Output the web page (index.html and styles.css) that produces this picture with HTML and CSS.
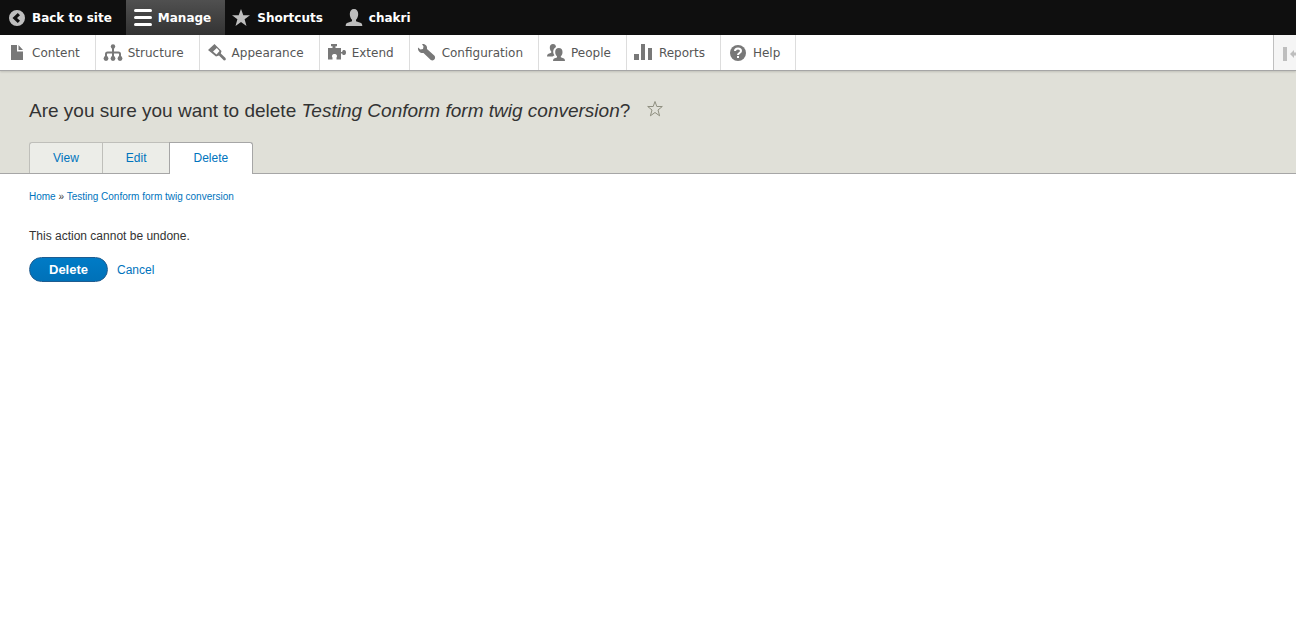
FILE: index.html
```html
<!DOCTYPE html>
<html lang="en">
<head>
    <meta charset="utf-8">
    <title>Are you sure you want to delete Testing Conform form twig conversion?</title>
    <link rel="stylesheet" href="styles.css">
</head>
<body>
    <nav class="toolbar-bar" aria-label="Toolbar">
        <a class="bar-item" href="#">
            <svg class="icon" viewBox="0 0 20 20"><path fill-rule="evenodd" d="M10 2a8 8 0 1 0 0 16a8 8 0 0 0 0-16zM10.800 5L13 7.200L10 10L13 12.800L10.800 15L5.500 10z"/></svg>
            Back to site
        </a>
        <a class="bar-item active" href="#">
            <svg class="icon" viewBox="0 0 20 20"><rect x="1" y="1" width="18" height="3" rx="1.500"/><rect x="1" y="8" width="18" height="3" rx="1.500"/><rect x="1" y="15" width="18" height="3" rx="1.500"/></svg>
            Manage
        </a>
        <a class="bar-item" href="#">
            <svg class="icon" viewBox="0 0 20 20"><path d="M9 1L11.300 7.200H18L12.600 11.300L14.500 18L9 14L3.500 18L5.400 11.300L0 7.200H6.700z"/></svg>
            Shortcuts
        </a>
        <a class="bar-item" href="#">
            <svg class="icon" viewBox="0 0 20 20"><path d="M10 1C7.300 1 5.800 3 5.800 6C5.800 8.500 6.700 10.500 8 11.700V13.200L3 15C2 15.500 1.700 16.500 1.700 18H18.300C18.300 16.500 18 15.500 17 15L12 13.200V11.700C13.300 10.500 14.200 8.500 14.200 6C14.200 3 12.700 1 10 1z"/></svg>
            chakri
        </a>
    </nav>

    <nav class="toolbar-tray" aria-label="Administration menu">
        <a class="tray-item" href="#">
            <svg class="icon" viewBox="0 0 20 20"><path d="M4 2H10V8.500H16V17H4zM11.500 2L16 7H11.500z"/></svg>
            Content
        </a>
        <a class="tray-item" href="#">
            <svg class="icon" viewBox="0 0 20 20"><circle cx="10" cy="3.500" r="2.200"/><circle cx="3" cy="15.500" r="2.400"/><circle cx="10" cy="15.500" r="2.400"/><circle cx="17" cy="15.500" r="2.400"/><path class="line" d="M10 4V15M3 15V11Q3 9.500 4.500 9.500H15.500Q17 9.500 17 11V15"/></svg>
            Structure
        </a>
        <a class="tray-item" href="#">
            <svg class="icon" viewBox="0 0 20 20"><path fill-rule="evenodd" d="M7.500 1L14.500 8L13.800 10.500L18.500 15Q19.500 17.500 17 17.500L12 12.500L9 13.500L1 7zM9.800 5L6 8.500L9.500 11.500L12.500 8z"/></svg>
            Appearance
        </a>
        <a class="tray-item" href="#">
            <svg class="icon" viewBox="0 0 20 20"><path d="M1 5H5.500V3.200H4V1H10V3.200H8.500V5H14V9H15.200C15.200 7.500 16 7 17.200 7C18.500 7 19 8.200 19 9.500S18.500 12 17.200 12C16 12 15.200 11.500 15.200 10.500H14V16.500H9.500V14.500C10.500 13.500 10.200 11 7.500 11S4.500 13.500 5.500 14.500V16.500H1z"/></svg>
            Extend
        </a>
        <a class="tray-item" href="#">
            <svg class="icon" viewBox="0 0 20 20"><path d="M5 1C8.500 .500 10.500 3 10 6L17.500 12.800C19.300 15.500 16.500 18.700 13.800 17L6.500 10C3.500 10.500 .500 8 1 4.500L3.500 6.500L6 6L6.500 3.500z"/></svg>
            Configuration
        </a>
        <a class="tray-item" href="#">
            <svg class="icon" viewBox="0 0 20 20"><path d="M7 1C5 1 3.800 2.300 3.800 4.500C3.800 6.500 4.400 7.500 5.200 8.300V9.700L2 11Q1 11.500 1 13.500H6.500L8.500 12.300C7 10.500 6.500 7 8.800 5L10 4C9.800 2 9 1 7 1z"/><path d="M12.800 5C10.500 5 9.200 6.500 9.200 9C9.200 11 9.900 12.500 11 13.300V14.500L8 15.500Q7 16 7 18H19Q19 16 18 15.500L14.800 14.300V13.300C15.900 12.500 16.500 11 16.500 9C16.500 6.500 15.200 5 12.800 5z"/></svg>
            People
        </a>
        <a class="tray-item" href="#">
            <svg class="icon" viewBox="0 0 20 20"><path d="M0 11H5V17H0zM7 1H11V17H7zM14 5H18V17H14z"/></svg>
            Reports
        </a>
        <a class="tray-item" href="#">
            <svg class="icon" viewBox="0 0 20 20"><circle cx="10" cy="10" r="8"/><path class="mark" d="M7 8C7 4.500 13 4.500 13 8C13 10 10 10 10 12"/><rect class="dot" x="9" y="13" width="2" height="2"/></svg>
            Help
        </a>
        <button class="toggle" type="button" aria-label="Vertical orientation">
            <svg class="toggle-icon" viewBox="0 0 14 14"><path d="M0 0H4V14H0zM7 7L11 3V5.500H14V8.500H11V11z"/></svg>
        </button>
    </nav>

    <header class="content-header">
        <h1 class="page-title">
            <span>Are you sure you want to delete <em>Testing Conform form twig conversion</em>?</span>
            <button class="shortcut" type="button" aria-label="Add to shortcuts">
                <svg class="star" viewBox="0 0 18 18"><path d="M9 1.500L10.800 6.500H16.300L12 10L13.600 15.800L9 12.500L4.400 15.800L6 10L1.700 6.500H7.200z"/></svg>
            </button>
        </h1>
        <nav class="tabs" aria-label="Tabs">
            <a class="tab" href="#">View</a>
            <a class="tab" href="#">Edit</a>
            <a class="tab current" href="#">Delete</a>
        </nav>
    </header>

    <main class="content">
        <nav class="breadcrumb" aria-label="Breadcrumb">
            <a href="#">Home</a> » <a href="#">Testing Conform form twig conversion</a>
        </nav>
        <form class="confirm-form">
            <p class="message">This action cannot be undone.</p>
            <div class="actions">
                <button class="button-primary" type="submit">Delete</button>
                <a href="#">Cancel</a>
            </div>
        </form>
    </main>
</body>
</html>
```
FILE: styles.css
```css
* {
    box-sizing: border-box;
}
body {
    margin: 0;
    background-color: #fff;
    color: #333;
    font-family: "Liberation Sans", Arial, sans-serif;
    font-size: 12px;
    line-height: 18px;
}
a {
    color: #0074bd;
    text-decoration: none;
}
button {
    font-family: inherit;
    cursor: pointer;
}

/* Toolbar */
.toolbar-bar,
.toolbar-tray {
    display: flex;
    font-family: "DejaVu Sans", Verdana, sans-serif;
    font-size: 12px;
    line-height: 17px;
}
.toolbar-bar {
    height: 35px;
    background-color: #0f0f0f;
    font-weight: bold;
}
.bar-item {
    display: flex;
    align-items: center;
    gap: 5px;
    padding: 1px 14px 0 7px;
    color: #fff;
}
.bar-item.active {
    background-image: linear-gradient(#505050, #333);
}
.icon {
    width: 20px;
    height: 20px;
    flex: none;
    fill: #bebebe;
}
.active .icon {
    fill: #fff;
}
.toolbar-tray {
    position: relative;
    height: 36px;
    border-bottom: 1px solid #a6a6a6;
    background-color: #fff;
    box-shadow: 0 1px 2px rgba(0, 0, 0, 0.15);
}
.tray-item {
    display: flex;
    align-items: center;
    gap: 5px;
    padding: 1px 15px 0 7px;
    border-right: 1px solid #ddd;
    color: #565656;
}
.tray-item .icon {
    fill: #787878;
}
.icon .line {
    fill: none;
    stroke: #787878;
    stroke-width: 2;
}
.icon .mark {
    fill: none;
    stroke: #fff;
    stroke-width: 2;
}
.icon .dot {
    fill: #fff;
}
.toggle {
    display: flex;
    align-items: center;
    width: 23px;
    margin-left: auto;
    padding: 2px 0 0 9px;
    border: 0;
    border-left: 1px solid #c0c0c0;
    background-color: #f5f5f5;
}
.toggle-icon {
    width: 14px;
    height: 14px;
    flex: none;
    fill: #bebebe;
}

/* Page header */
.content-header {
    padding: 26px 29px 0;
    border-bottom: 1px solid #a6a6a6;
    background-color: #e0e0d8;
}
.page-title {
    display: flex;
    align-items: center;
    gap: 16px;
    margin: 0 0 17px;
    font-size: 19px;
    font-weight: normal;
    line-height: 28px;
}
.shortcut {
    display: flex;
    padding: 0 0 4px;
    border: 0;
    background: none;
}
.star {
    width: 18px;
    height: 18px;
    fill: none;
    stroke: #8f8f80;
}
.tabs {
    display: flex;
}
.tab {
    padding: 6px 23px;
    border: 1px solid #bfbfba;
    border-right: 0;
    border-bottom: 0;
    background-color: #ecede8;
}
.tab:first-child {
    border-top-left-radius: 3px;
}
.tab.current {
    margin-bottom: -1px;
    padding: 6px 24px 7px 23px;
    border-color: #a6a6a6;
    border-right: 1px solid #a6a6a6;
    border-radius: 0 3px 0 0;
    background-color: #fff;
}

/* Content */
.content {
    padding: 14px 29px;
}
.breadcrumb {
    font-size: 10px;
}
.message {
    margin: 21px 0 12px;
}
.actions {
    display: flex;
    align-items: center;
    gap: 9px;
}
.button-primary {
    padding: 4px 19px;
    border: 1px solid #1e5c90;
    border-radius: 20px;
    background-image: linear-gradient(#007bc6, #0071b8);
    color: #fff;
    font-size: 13px;
    font-weight: bold;
    line-height: 15px;
}
```
